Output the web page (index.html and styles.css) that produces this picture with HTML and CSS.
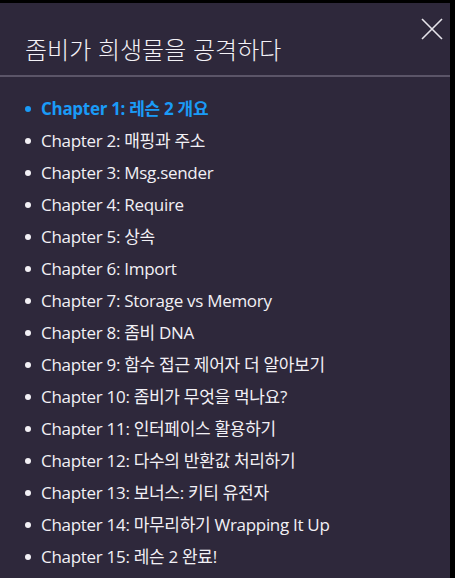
FILE: index.html
```html
<!DOCTYPE html>
<html lang="ko">
<head>
<meta charset="utf-8">
<link rel="stylesheet" href="styles.css">
</head>
<body>
<div class="panel">
  <div class="header">
    <h1 class="title">좀비가 희생물을 공격하다</h1>
    <button class="close" aria-label="닫기">
      <svg width="22" height="22" viewBox="0 0 22 22"><path d="M1 1 L21 21 M21 1 L1 21" stroke="#e6e4ea" stroke-width="1.6" fill="none"/></svg>
    </button>
  </div>
  <ul class="chapters">
    <li class="active">Chapter 1: 레슨 2 개요</li>
    <li>Chapter 2: 매핑과 주소</li>
    <li>Chapter 3: Msg.sender</li>
    <li>Chapter 4: Require</li>
    <li>Chapter 5: 상속</li>
    <li>Chapter 6: Import</li>
    <li>Chapter 7: Storage vs Memory</li>
    <li>Chapter 8: 좀비 DNA</li>
    <li>Chapter 9: 함수 접근 제어자 더 알아보기</li>
    <li>Chapter 10: 좀비가 무엇을 먹나요?</li>
    <li>Chapter 11: 인터페이스 활용하기</li>
    <li>Chapter 12: 다수의 반환값 처리하기</li>
    <li>Chapter 13: 보너스: 키티 유전자</li>
    <li>Chapter 14: 마무리하기 Wrapping It Up</li>
    <li>Chapter 15: 레슨 2 완료!</li>
  </ul>
</div>
</body>
</html>
```

FILE: styles.css
```css
html, body {
  margin: 0;
  padding: 0;
  background: #000;
  height: 100%;
  overflow: hidden;
}
body {
  padding-top: 3px;
  padding-right: 5px;
  box-sizing: border-box;
}
.panel {
  background: #2e283b;
  height: 100%;
  color: #f2f0f5;
  font-family: "Open Sans", "Noto Sans CJK KR", sans-serif;
}
.header {
  position: relative;
  height: 72px;
  border-bottom: 2px solid #5b5568;
  display: flex;
  align-items: flex-end;
}
.title {
  margin: 0 0 9px 25px;
  font-family: "Noto Sans CJK KR", sans-serif;
  font-weight: 300;
  font-size: 24px;
  line-height: 34px;
  color: #f4f2f7;
}
.close {
  position: absolute;
  top: 15px;
  right: 7px;
  background: none;
  border: 0;
  padding: 0;
  width: 22px;
  height: 22px;
}
.close svg { display: block; }
.chapters {
  list-style: none;
  margin: 0;
  padding: 16px 0 0 41px;
}
.chapters li {
  position: relative;
  font-size: 17px;
  line-height: 32px;
  height: 32px;
  letter-spacing: -0.3px;
  white-space: nowrap;
}
.chapters li::before {
  content: "";
  position: absolute;
  left: -16px;
  top: 13px;
  width: 6px;
  height: 6px;
  border-radius: 50%;
  background: #f2f0f5;
}
.chapters li.active {
  color: #1a9bf7;
  font-weight: 700;
}
.chapters li.active::before {
  background: #1a9bf7;
}
```
